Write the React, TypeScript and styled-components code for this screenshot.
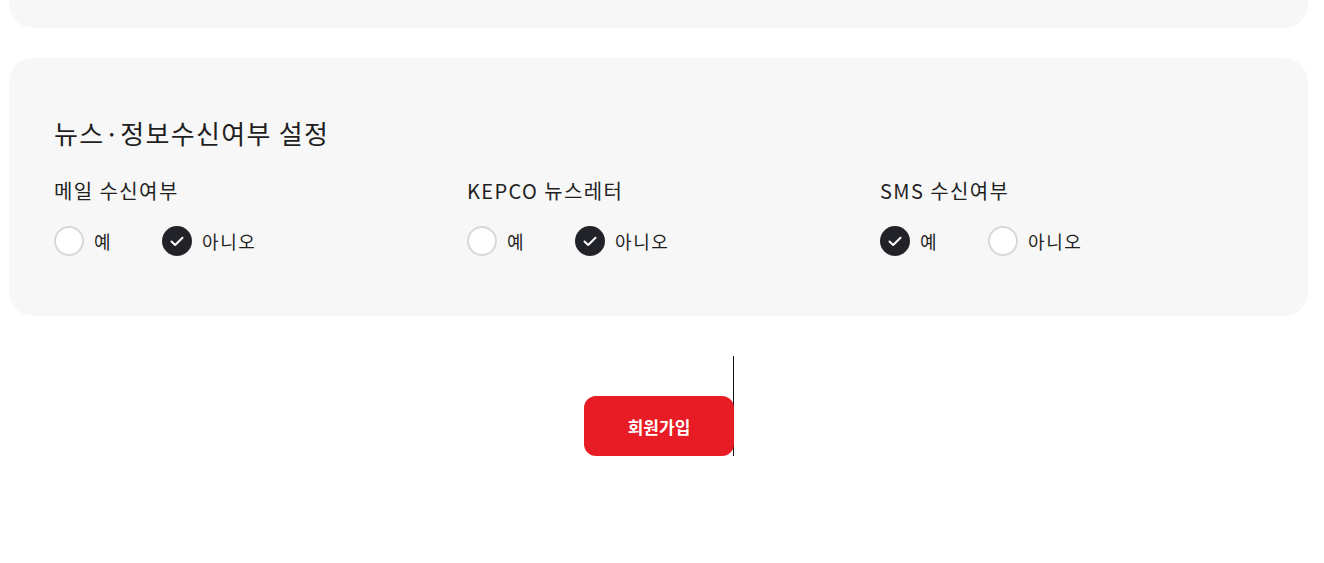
import styled, {createGlobalStyle} from 'styled-components';

const GlobalStyle = createGlobalStyle`
  html, body {
    margin: 0;
    padding: 0;
    background: #fff;
  }
  body {
    font-family: "Noto Sans CJK KR", "Noto Sans", sans-serif;
    color: #222;
  }
`;

type Choice = {yes: boolean};

const groups: {label: string; value: Choice}[] = [
    {label: '메일 수신여부', value: {yes: false}},
    {label: 'KEPCO 뉴스레터', value: {yes: false}},
    {label: 'SMS 수신여부', value: {yes: true}},
];

const Check = () => (
    <svg width="14" height="11" viewBox="0 0 14 11" fill="none">
        <path d="M1.5 5.5L5.2 9L12.5 1.8" stroke="#fff" strokeWidth="2" strokeLinecap="round" strokeLinejoin="round"/>
    </svg>
);

const Radio = ({checked, text}: {checked: boolean; text: string}) => (
    <Option>
        <Circle $checked={checked}>{checked && <Check/>}</Circle>
        <OptionText>{text}</OptionText>
    </Option>
);

const App = () => {
    return <Page>
        <GlobalStyle/>
        <TopPanel/>

        <Panel>
            <Title>뉴스·정보수신여부 설정</Title>
            <Grid>
                {groups.map(group => (
                    <Group key={group.label}>
                        <Label>{group.label}</Label>
                        <Options>
                            <Radio checked={group.value.yes} text="예"/>
                            <Radio checked={!group.value.yes} text="아니오"/>
                        </Options>
                    </Group>
                ))}
            </Grid>
        </Panel>

        <ButtonArea>
            <ButtonWrap>
                <SubmitButton type="button">회원가입</SubmitButton>
            </ButtonWrap>
        </ButtonArea>
    </Page>;
};

export default App;



const Page = styled.div`
  width: 1324px;
  height: 563px;
  overflow: hidden;
  padding: 0 16px 0 9px;
  box-sizing: border-box;
`;

const TopPanel = styled.div`
  height: 28px;
  background: #f7f7f7;
  border-radius: 0 0 24px 24px;
`;

const Panel = styled.section`
  margin-top: 30px;
  background: #f7f7f7;
  border-radius: 24px;
  padding: 57px 45px 60px;
`;

const Title = styled.h2`
  margin: 0;
  font-size: 26px;
  line-height: 36px;
  font-weight: 400;
  color: #1f1f1f;
  letter-spacing: 1.3px;
`;

const Grid = styled.div`
  margin-top: 26px;
  display: grid;
  grid-template-columns: repeat(3, 383px);
  column-gap: 30px;
`;

const Group = styled.div`
  display: flex;
  flex-direction: column;
  gap: 21px;
`;

const Label = styled.div`
  font-size: 20px;
  line-height: 28px;
  color: #1f1f1f;
  letter-spacing: 1.4px;
`;

const Options = styled.div`
  display: flex;
  align-items: center;
`;

const Option = styled.label`
  display: flex;
  align-items: center;
  gap: 10px;
  min-width: 108px;
  cursor: pointer;
`;

const Circle = styled.span<{$checked: boolean}>`
  width: 30px;
  height: 30px;
  box-sizing: border-box;
  border-radius: 50%;
  display: flex;
  align-items: center;
  justify-content: center;
  background: ${p => p.$checked ? '#222328' : '#fff'};
  border: ${p => p.$checked ? 'none' : '2px solid #d8d8dc'};
`;

const OptionText = styled.span`
  font-size: 18px;
  line-height: 26px;
  color: #1f1f1f;
  letter-spacing: 1.6px;
`;

const ButtonArea = styled.div`
  margin-top: 40px;
  display: flex;
  padding-left: 575px;
`;

const ButtonWrap = styled.div`
  height: 100px;
  display: flex;
  align-items: flex-end;
  border-right: 1px solid #111;
`;

const SubmitButton = styled.button`
  width: 150px;
  height: 60px;
  margin-right: -1px;
  border: none;
  border-radius: 12px;
  background: #e81c24;
  color: #fff;
  font-family: "Noto Sans CJK KR", sans-serif;
  font-size: 17px;
  font-weight: 700;
  cursor: pointer;
`;
